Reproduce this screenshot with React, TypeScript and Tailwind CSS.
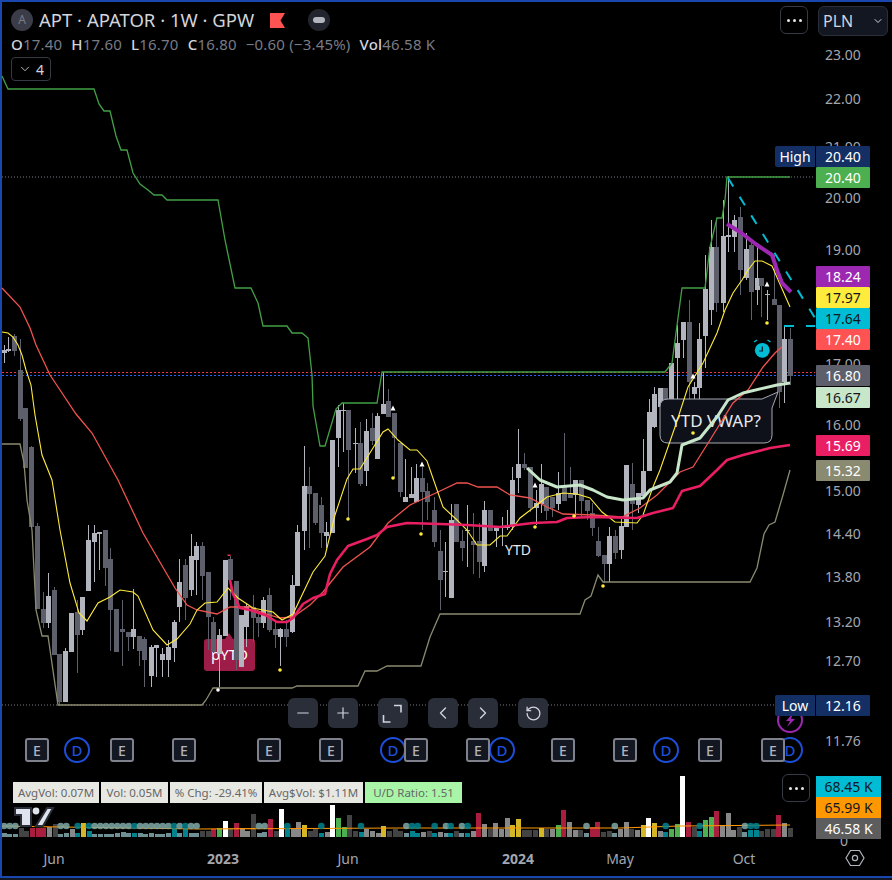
import { ChevronDown, ChevronLeft, ChevronRight, Minus, Plus, RotateCcw } from 'lucide-react';

// x, wick top, wick bottom, body top, body bottom, 1 = up
const candles: number[][] = [
  [4, 345, 363, 350, 353, 1], [8, 337, 352, 349, 351, 1], [14, 334, 356, 336, 351, 0], [20, 339, 421, 370, 419, 0],
  [25, 408, 468, 408, 468, 0], [31, 446, 527, 447, 527, 0], [37, 523, 609, 526, 609, 0], [42.5, 592, 628, 609, 623, 0],
  [48, 573, 628, 596, 623, 1], [54, 587, 655, 590, 655, 0], [59, 654, 706, 654, 702, 0], [65, 648, 702, 651, 702, 1],
  [71, 613, 652, 613, 652, 1], [77, 600, 673, 612, 635, 0], [82, 597, 635, 597, 630, 1], [88, 525, 591, 540, 591, 1],
  [93.5, 525, 582, 533, 542, 1], [99, 532, 570, 532, 534, 1], [105, 530, 586, 530, 568, 0], [110, 548, 651, 559, 610, 0],
  [116, 609, 652, 609, 652, 0], [122, 600, 666, 629, 632, 0], [127.5, 633, 651, 632, 637, 0], [133, 589, 649, 629, 637, 1],
  [139, 637, 666, 636, 651, 0], [144, 637, 687, 639, 660, 0], [150.5, 645, 687, 647, 676, 1], [156, 645, 677, 645, 648, 1],
  [161.5, 648, 677, 654, 660, 1], [167.5, 640, 677, 647, 660, 1], [173.5, 620, 662, 622, 648, 1], [179, 559, 622, 582, 607, 1],
  [184.5, 559, 620, 565, 598, 0], [190.5, 534, 596, 556, 590, 1], [196, 542, 595, 546, 560, 1], [201.5, 542, 600, 546, 576, 0],
  [207.5, 572, 650, 572, 617, 0], [213, 617, 653, 622, 652, 0], [218.5, 629, 687, 635, 654, 1], [224.5, 560, 636, 560, 636, 1],
  [229.5, 556, 600, 559, 580, 0], [235.5, 581, 670, 581, 660, 0], [240.5, 615, 667, 615, 667, 1], [246, 603, 647, 606, 627, 1],
  [252.5, 595, 642, 607, 618, 0], [257.5, 613, 637, 617, 623, 0], [263, 597, 628, 600, 623, 1], [269, 588, 632, 595, 630, 0],
  [274.5, 622, 648, 629, 635, 0], [280, 628, 666, 629, 637, 1], [286, 620, 647, 629, 637, 0], [291.5, 575, 633, 585, 632, 1],
  [297, 525, 586, 532, 586, 1], [303.7, 446, 550, 486, 531, 1], [308.5, 467, 548, 486, 494, 0], [314.5, 493, 525, 493, 523, 0],
  [320.5, 497, 548, 505, 533, 0], [325.5, 522, 548, 532, 536, 1], [331.5, 440, 533, 440, 533, 1], [337.5, 405, 467, 410, 438, 1],
  [342.5, 403, 452, 410, 411, 1], [348, 410, 520, 410, 450, 0], [354.5, 428, 473, 443, 444, 1], [359.5, 422, 486, 443, 484, 0],
  [365.5, 419, 486, 431, 471, 1], [371.5, 413, 445, 428, 441, 0], [376.5, 413, 459, 416, 459, 1], [382.5, 372, 414, 404, 414, 1],
  [388, 389, 417, 401, 417, 0], [393.5, 413, 478, 413, 438, 0], [399.5, 443, 497, 443, 492, 0], [405, 459, 502, 497, 502, 1],
  [410.5, 467, 498, 494, 498, 1], [416, 464, 502, 478, 502, 1], [421.5, 467, 530, 478, 492, 0], [427, 483, 520, 491, 502, 0],
  [433.5, 497, 547, 510, 542, 0], [439.5, 530, 610, 551, 580, 0], [445, 542, 597, 571, 572, 1], [450.5, 504, 598, 520, 598, 1],
  [456, 504, 542, 504, 542, 0], [461.5, 530, 561, 541, 548, 0], [467, 505, 567, 530, 531, 1], [473, 513, 574, 541, 545, 0],
  [478.5, 523, 578, 541, 562, 0], [484, 501, 572, 510, 566, 1], [490, 510, 531, 510, 531, 0], [495.5, 527, 547, 527, 531, 1],
  [501.5, 517, 546, 526, 528, 1], [507, 510, 530, 526, 528, 1], [512, 467, 530, 480, 527, 1], [518, 429, 493, 464, 478, 1],
  [524, 453, 470, 464, 468, 0], [530, 467, 512, 467, 508, 0], [535.5, 490, 525, 503, 508, 1], [540.5, 464, 513, 484, 504, 1],
  [546, 487, 520, 487, 511, 0], [552, 497, 517, 497, 508, 0], [557.5, 472, 510, 493, 504, 1], [563.5, 433, 501, 487, 501, 0],
  [569.5, 467, 498, 493, 498, 0], [575, 480, 517, 480, 495, 1], [581, 480, 517, 480, 501, 0], [586.5, 500, 520, 500, 511, 0],
  [591.5, 503, 536, 513, 528, 0], [597.5, 527, 557, 541, 556, 0], [603.5, 555, 583, 555, 564, 0], [608.5, 527, 582, 536, 564, 1],
  [614.5, 530, 559, 536, 553, 0], [620.5, 519, 559, 526, 550, 1], [625.5, 465, 527, 465, 527, 1], [631.5, 463, 530, 484, 504, 0],
  [637.5, 493, 513, 493, 505, 1], [642.5, 439, 496, 471, 496, 1], [648.5, 399, 471, 412, 471, 1], [654, 387, 428, 394, 427, 1],
  [659.5, 388, 408, 388, 407, 1], [665, 388, 400, 388, 400, 0], [671, 363, 403, 363, 400, 1], [676.5, 325, 400, 343, 358, 1],
  [682.5, 322, 358, 322, 340, 1], [688.5, 300, 412, 322, 382, 0], [693.5, 382, 410, 387, 394, 1], [699, 323, 403, 339, 388, 1],
  [705, 255, 368, 289, 336, 1], [710.5, 220, 325, 247, 310, 1], [716, 218, 312, 247, 303, 0], [722.5, 200, 312, 236, 303, 1],
  [727.5, 176, 252, 235, 237, 1], [733.5, 215, 252, 220, 237, 1], [739.5, 207, 295, 217, 270, 0], [745.5, 233, 280, 249, 278, 1],
  [751, 243, 320, 245, 292, 0], [756.5, 243, 305, 278, 290, 1], [761, 278, 317, 278, 286, 0], [767, 290, 320, 294, 295, 1],
  [773.5, 255, 305, 299, 305, 0], [778.5, 305, 408, 305, 392, 0], [784, 327, 403, 339, 382, 1], [789.5, 328, 385, 339, 376, 0],
];

const toPts = (p: number[][]) => p.map((a) => a.join(',')).join(' ');

const greenLine = [[2, 76], [8, 89], [94, 89], [99, 104], [104, 111], [110, 111], [116, 136], [121, 150], [127, 150], [133, 173], [140, 184], [148, 190], [154, 195], [162, 195], [167, 200], [218, 200], [225, 240], [235, 288], [251, 288], [258, 303], [263, 326], [287, 326], [292, 333], [302, 333], [308, 338], [312, 375], [313, 406], [320, 446], [325, 446], [336, 409], [342, 403], [377, 403], [382, 372], [665, 372], [672, 363], [682, 288], [705, 288], [710, 247], [717, 218], [722, 218], [725, 200], [727, 177], [790, 177]];
const grayLine = [[2, 444], [20, 444], [24, 463], [27, 500], [32, 530], [36, 610], [42, 636], [48, 636], [58, 705], [202, 705], [206, 700], [213, 688], [292, 688], [297, 686], [358, 686], [365, 671], [377, 671], [387, 666], [421, 666], [430, 637], [440, 614], [580, 614], [585, 600], [591, 596], [598, 575], [603, 582], [750, 582], [757, 568], [764, 534], [769, 525], [775, 522], [783, 495], [790, 470]];
const yellowLine = [[2, 332], [8, 333], [13, 337], [18, 345], [22, 355], [26, 370], [31, 385], [35, 415], [42, 455], [52, 480], [60, 530], [70, 583], [79, 613], [87, 621], [98, 603], [110, 597], [120, 590], [133, 592], [138, 596], [153, 630], [167, 645], [177, 639], [190, 624], [197, 610], [205, 603], [217, 602], [228, 588], [238, 598], [253, 608], [273, 612], [282, 620], [293, 614], [313, 572], [325, 556], [335, 515], [347, 479], [353, 469], [360, 469], [373, 448], [383, 432], [388, 429], [398, 440], [410, 450], [417, 450], [427, 461], [443, 507], [457, 520], [467, 530], [477, 545], [490, 545], [500, 536], [507, 536], [520, 518], [533, 508], [547, 497], [563, 493], [577, 494], [590, 498], [602, 512], [615, 522], [637, 523], [643, 515], [653, 487], [660, 470], [675, 427], [688, 387], [703, 363], [717, 333], [725, 310], [733, 293], [742, 280], [748, 270], [755, 261], [762, 261], [772, 266], [790, 307]];
const redLine = [[2, 288], [20, 307], [30, 328], [36, 345], [50, 375], [58, 387], [76, 414], [92, 433], [118, 480], [143, 533], [175, 588], [187, 605], [197, 610], [217, 614], [230, 607], [250, 607], [263, 613], [280, 618], [293, 617], [310, 605], [323, 592], [343, 567], [370, 547], [388, 523], [410, 505], [438, 492], [457, 483], [467, 483], [478, 487], [497, 487], [510, 495], [530, 498], [547, 507], [563, 514], [593, 515], [622, 517], [640, 508], [657, 495], [680, 472], [693, 467], [710, 440], [733, 403], [748, 390], [763, 367], [775, 353], [782, 347]];
const pinkLine = [[230, 580], [233, 594], [240, 608], [250, 610], [265, 615], [277, 622], [287, 622], [293, 618], [303, 604], [313, 598], [325, 594], [330, 574], [337, 560], [348, 546], [367, 539], [377, 535], [387, 527], [407, 523], [440, 524], [467, 525], [500, 527], [533, 523], [557, 522], [567, 518], [593, 517], [637, 518], [653, 513], [673, 508], [682, 491], [700, 486], [717, 470], [727, 460], [743, 455], [770, 448], [790, 445]];
const vwapLine = [[527, 468], [540, 480], [557, 487], [580, 485], [593, 490], [607, 497], [623, 500], [643, 498], [650, 490], [670, 482], [677, 473], [682, 445], [700, 438], [717, 417], [728, 400], [743, 393], [777, 385], [790, 383]];
const purpleLine = [[727, 224], [740, 232], [757, 245], [772, 255], [777, 270], [782, 283], [791, 292]];

const yellowDots = [[693, 433], [767, 323], [348, 519], [393, 478], [421, 534], [535, 527], [574, 516], [603, 586], [280, 670]];
const triangles = [[393, 408], [422, 464], [535, 485], [767, 284], [693, 376]];

const axisTicks: [string, number][] = [
  ['23.00', 55], ['22.00', 99], ['21.00', 147], ['20.00', 198], ['19.00', 250], ['17.00', 364], ['16.00', 425],
  ['15.00', 491], ['14.40', 534], ['13.80', 577], ['13.20', 622], ['12.70', 661], ['11.76', 741],
];

const priceTags: { text: string; top: number; cls: string }[] = [
  { text: '20.40', top: 146, cls: 'bg-[#132f63] text-white' },
  { text: '20.40', top: 167, cls: 'bg-[#4caf50] text-white' },
  { text: '18.24', top: 266, cls: 'bg-[#9c27b0] text-white' },
  { text: '17.97', top: 287, cls: 'bg-[#ffeb3b] text-[#131722]' },
  { text: '17.64', top: 308, cls: 'bg-[#00bcd4] text-[#131722]' },
  { text: '17.40', top: 329, cls: 'bg-[#ff5252] text-white' },
  { text: '16.80', top: 365, cls: 'bg-[#5d606b] text-white' },
  { text: '16.67', top: 387, cls: 'bg-[#c8e6c9] text-[#131722]' },
  { text: '15.69', top: 435, cls: 'bg-[#e91e63] text-white' },
  { text: '15.32', top: 460, cls: 'bg-[#8a8a70] text-white' },
  { text: '12.16', top: 695, cls: 'bg-[#132f63] text-white' },
];

const eBadges = [37, 122, 184, 269, 331, 416, 478, 563, 625, 710, 773];
const dBadges = [77, 393, 502, 666, 790];

const volColors: Record<string, string> = {
  d: '#434343', g: '#888888', r: '#a91e3f', G: '#4caf50', y: '#d4b726', w: '#ffffff', t: '#00838f', l: '#6f9094',
};

// heights in zoomed units (1/3 px), left half then right half of the pane
const volA: [number, string][] = [
  [10, 'l'], [8, 'l'], [8, 'l'], [25, 'd'], [18, 'd'], [27, 'r'], [27, 'r'], [27, 'r'], [30, 'g'], [38, 'd'],
  [8, 'l'], [12, 'l'], [22, 'g'], [10, 't'], [40, 'y'], [18, 't'], [8, 'l'], [8, 'l'], [8, 'l'], [8, 'l'],
  [12, 'l'], [14, 'l'], [10, 'l'], [12, 't'], [10, 'l'], [8, 'l'], [10, 'l'], [8, 'l'], [8, 'l'], [10, 'l'],
  [22, 't'], [12, 'l'], [25, 't'], [12, 'l'], [10, 'l'], [18, 'd'], [18, 'd'], [22, 'r'], [26, 'G'], [46, 'w'],
  [26, 'd'], [42, 'r'], [26, 'g'], [18, 'g'], [68, 'd'], [12, 'l'], [15, 'l'], [52, 'r'], [18, 'd'], [84, 'w'],
  [25, 't'], [22, 'g'], [44, 'g'], [35, 'y'], [18, 'd'], [22, 'd'], [12, 't'], [14, 'g'], [95, 'w'], [56, 'G'],
  [30, 'G'], [65, 'd'], [18, 'd'], [14, 't'], [24, 'g'], [18, 'g'], [12, 'g'], [32, 'y'], [18, 'd'], [22, 'd'],
  [18, 'd'], [12, 'l'], [18, 't'], [12, 't'], [15, 'g'], [18, 'd'], [12, 't'], [15, 'g'], [12, 'l'],
];
const volB: [number, string][] = [
  [12, 't'], [18, 'd'], [12, 'l'], [12, 't'], [18, 'g'], [70, 'r'], [38, 'g'], [22, 'd'], [40, 'g'], [24, 'g'],
  [55, 'g'], [35, 'y'], [52, 'y'], [20, 'd'], [20, 'd'], [20, 'd'], [26, 'y'], [24, 'd'], [24, 'g'], [34, 'G'],
  [80, 'r'], [44, 'g'], [20, 'g'], [20, 'd'], [10, 'l'], [28, 'r'], [44, 'r'], [15, 'd'], [18, 'd'], [10, 'l'],
  [22, 'g'], [44, 'g'], [22, 'd'], [20, 'g'], [35, 'y'], [56, 'w'], [42, 'y'], [18, 'g'], [14, 't'], [24, 'G'],
  [38, 'G'], [182, 'w'], [44, 'r'], [28, 'd'], [18, 't'], [50, 'G'], [60, 'G'], [78, 'r'], [35, 'g'], [70, 'g'],
  [20, 'g'], [30, 'd'], [14, 'l'], [20, 't'], [20, 't'], [18, 'd'], [24, 'd'], [24, 'd'], [65, 'r'], [40, 'g'], [25, 'd'],
];
const volBars = [
  ...volA.map(([h, c], i) => ({ x: (12 + 17 * i) / 3, h: h / 3, c })),
  ...volB.map(([h, c], i) => ({ x: 446 + (14 + 16.98 * i) / 3, h: h / 3, c })),
];

const statChips: { text: string; cls: string }[] = [
  { text: 'AvgVol: 0.07M', cls: 'w-[86px] bg-[#e8e8e3]' },
  { text: 'Vol: 0.05M', cls: 'w-[67px] bg-[#e8e8e3]' },
  { text: '% Chg: -29.41%', cls: 'w-[92px] bg-[#e8e8e3]' },
  { text: 'Avg$Vol: $1.11M', cls: 'w-[99px] bg-[#e8e8e3]' },
  { text: 'U/D Ratio: 1.51', cls: 'w-[97px] bg-[#a8f5a8]' },
];

const timeLabels: { text: string; center: number; bold?: boolean }[] = [
  { text: 'Jun', center: 54 },
  { text: '2023', center: 223, bold: true },
  { text: 'Jun', center: 348 },
  { text: '2024', center: 518, bold: true },
  { text: 'May', center: 620 },
  { text: 'Oct', center: 744 },
];

function ZoomButton({ children, cls }: { children: React.ReactNode; cls?: string }) {
  return (
    <div className={`flex h-[30px] w-[30px] items-center justify-center rounded-md bg-[#2a2e39] text-[#d1d4dc] ${cls ?? ''}`}>
      {children}
    </div>
  );
}

function DotsButton() {
  return (
    <div className="flex h-[28px] w-[28px] items-center justify-center gap-[3px] rounded-md border border-[#363a45] bg-black">
      <span className="h-[3px] w-[3px] rounded-full bg-[#e8e8e8]" />
      <span className="h-[3px] w-[3px] rounded-full bg-[#e8e8e8]" />
      <span className="h-[3px] w-[3px] rounded-full bg-[#e8e8e8]" />
    </div>
  );
}

function Legend() {
  const item = (l: string, v: string) => (
    <span>
      <span className="font-medium text-[#d1d4dc]">{l}</span>
      {v}
    </span>
  );
  return (
    <div className="absolute left-[9px] top-[7px] z-20">
      <div className="flex items-center">
        <div className="flex h-[22px] w-[22px] items-center justify-center rounded-full bg-[#3a3d47] text-[12px] text-[#787b86]">A</div>
        <span className="ml-[6px] text-[18.5px] leading-[22px] text-[#d1d4dc]">APT · APATOR · 1W · GPW</span>
        <svg width="15" height="15" viewBox="0 0 15 15" className="ml-[16px]">
          <polygon points="0,0 15,0 10.5,7.5 15,15 0,15" fill="#ff5252" />
        </svg>
        <div className="ml-[23px] flex h-[22px] w-[22px] items-center justify-center rounded-full bg-[#22252e]">
          <span className="h-[6px] w-[12px] rounded-[3px] bg-[#b2b5be]" />
        </div>
      </div>
      <div className="mt-[4px] flex gap-[9px] whitespace-nowrap text-[15px] leading-[18px] tracking-[0.2px] text-[#787b86]">
        {item('O', '17.40')}
        {item('H', '17.60')}
        {item('L', '16.70')}
        {item('C', '16.80')}
        <span>−0.60 (−3.45%)</span>
        {item('Vol', '46.58 K')}
      </div>
      <div className="mt-[4px] flex h-[24px] w-[40px] items-center justify-center gap-[4px] rounded border border-[#363a45] text-[14px] text-[#d1d4dc]">
        <ChevronDown size={14} strokeWidth={1.5} />
        <span>4</span>
      </div>
    </div>
  );
}

function PriceChart() {
  return (
    <svg viewBox="2 2 812 768" className="absolute inset-0 h-[768px] w-[812px] overflow-visible font-['Noto_Sans',sans-serif]">
      <line x1="2" x2="815" y1="177" y2="177" stroke="#787b86" strokeDasharray="1 2" />
      <line x1="2" x2="815" y1="705" y2="705" stroke="#787b86" strokeDasharray="1 2" />
      <line x1="2" x2="815" y1="372.5" y2="372.5" stroke="#f23645" strokeDasharray="2 2" />
      <line x1="2" x2="815" y1="375.5" y2="375.5" stroke="#2962ff" strokeDasharray="2 2" />

      <path d="M207 639 L225 639 L229 633 L233 639 L252 639 Q255 639 255 642 L255 668 Q255 671 252 671 L207 671 Q204 671 204 668 L204 642 Q204 639 207 639 Z" fill="#9e1c48" />
      <text x="229.5" y="660" textAnchor="middle" fontSize="15" fill="#fff">pYTD</text>

      {candles.map(([x, wt, wb, bt, bb, up], i) => (
        <g key={i} fill={up ? '#b2b5be' : '#5d606b'} shapeRendering="crispEdges">
          <rect x={Math.round(x)} y={wt} width="1" height={wb - wt} />
          <rect x={Math.round(x) - 2} y={bt} width="5" height={Math.max(bb - bt, 1)} />
        </g>
      ))}

      <path d="M668 399 L762 399 L778 392 L772 408 L772 435 Q772 443 764 443 L668 443 Q660 443 660 435 L660 407 Q660 399 668 399 Z" fill="#0e111a" stroke="#a6a9b2" strokeWidth="1" />
      <text x="716" y="427" textAnchor="middle" fontSize="17" fill="#e8e9ee">YTD VWAP?</text>
      <text x="518" y="555" textAnchor="middle" fontSize="14" fill="#e8e9ee">YTD</text>

      <polyline points={toPts(grayLine)} fill="none" stroke="#8a8a70" strokeWidth="1.3" />
      <polyline points={toPts(greenLine)} fill="none" stroke="#43a047" strokeWidth="1.3" />
      <polyline points={toPts(redLine)} fill="none" stroke="#ef5350" strokeWidth="1.3" />
      <polyline points={toPts(yellowLine)} fill="none" stroke="#ffeb3b" strokeWidth="1.1" />
      <polyline points={toPts(pinkLine)} fill="none" stroke="#e91e63" strokeWidth="2.6" strokeLinejoin="round" />
      <polyline points={toPts(vwapLine)} fill="none" stroke="#c8e6c9" strokeWidth="3" strokeLinejoin="round" />
      <polyline points={toPts(purpleLine)} fill="none" stroke="#9c27b0" strokeWidth="4" strokeLinejoin="round" />

      <line x1="728" y1="178" x2="815" y2="318" stroke="#00bcd4" strokeWidth="2" strokeDasharray="10 12" />
      <line x1="784" y1="326" x2="815" y2="326" stroke="#00bcd4" strokeWidth="2" strokeDasharray="10 12" />

      {yellowDots.map(([x, y]) => (
        <circle key={`${x}-${y}`} cx={x} cy={y} r="1.8" fill="#ffeb3b" />
      ))}
      <circle cx="218" cy="690" r="1.8" fill="#fff" />
      <rect x="227.5" y="554.5" width="3" height="1.5" fill="#f23645" />
      {triangles.map(([x, y]) => (
        <polygon key={x} points={`${x - 2.5},${y + 2.5} ${x},${y - 2.5} ${x + 2.5},${y + 2.5}`} fill="#fff" />
      ))}

      <g>
        <circle cx="762.3" cy="350.3" r="7.4" fill="#00bcd4" />
        <path d="M762.3 346.5 V351 H759" fill="none" stroke="#131722" strokeWidth="1.2" />
        <path d="M754 342 L757 340 M767.5 340 L770.5 342" stroke="#00bcd4" strokeWidth="1.4" />
      </g>
    </svg>
  );
}

function VolumeChart() {
  return (
    <svg viewBox="2 770 812 70" className="absolute inset-0 h-[70px] w-[812px]">
      {volBars.map((b, i) => (
        <rect key={i} x={b.x - 2.5} y={836.7 - b.h} width="5" height={b.h} fill={volColors[b.c]} shapeRendering="crispEdges" />
      ))}
      <polyline points="2,826 60,827 200,829 400,828 620,828 680,826 790,825" fill="none" stroke="#ff9800" strokeWidth="1.2" />
      {volBars
        .filter((b) => b.c === 't' || b.c === 'l')
        .map((b, i) => (
          <circle key={i} cx={b.x} cy="826" r="3.3" fill={b.c === 't' ? '#00838f' : '#7fa9a6'} fillOpacity="0.85" />
        ))}
    </svg>
  );
}

export default function App() {
  return (
    <div className="h-[880px] w-[892px] overflow-hidden bg-[#131722] font-['Noto_Sans',sans-serif]">
      <div className="flex h-[878px] flex-col border-b-2 border-l-2 border-t-2 border-b-[#1a47ad] border-l-[#1a47ad] border-t-[#1a47ad] bg-black">
        {/* price pane */}
        <div className="flex h-[768px]">
          <div className="relative w-[812px]">
            <PriceChart />
            <Legend />

            {dBadges.map((x) => (
              <div
                key={x}
                className="absolute top-[735px] flex h-[26px] w-[26px] items-center justify-center rounded-full border-2 border-[#1d4ed8] bg-black text-[15px] font-medium text-[#1d4ed8]"
                style={{ left: x - 15 }}
              >
                D
              </div>
            ))}
            {eBadges.map((x) => (
              <div
                key={x}
                className="absolute top-[736px] flex h-[24px] w-[24px] items-center justify-center rounded-[3px] border-2 border-[#7f828c] bg-[#131722] text-[14px] font-medium text-[#b2b5be]"
                style={{ left: x - 14 }}
              >
                E
              </div>
            ))}

            <div className="absolute left-[286px] top-[696px] flex">
              <ZoomButton><Minus size={18} strokeWidth={1.6} /></ZoomButton>
              <ZoomButton cls="ml-[10px]"><Plus size={18} strokeWidth={1.6} /></ZoomButton>
              <ZoomButton cls="ml-[20px]">
                <svg width="30" height="30" viewBox="0 0 30 30" fill="none" stroke="currentColor" strokeWidth="1.6">
                  <path d="M16 7.5h7v7M5.5 17v7h7" />
                </svg>
              </ZoomButton>
              <ZoomButton cls="ml-[20px]"><ChevronLeft size={20} strokeWidth={1.6} /></ZoomButton>
              <ZoomButton cls="ml-[10px]"><ChevronRight size={20} strokeWidth={1.6} /></ZoomButton>
              <ZoomButton cls="ml-[20px]"><RotateCcw size={17} strokeWidth={1.8} /></ZoomButton>
            </div>
          </div>

          {/* price axis */}
          <div className="relative flex-1 text-[14px] text-[#a3a6af]">
            {axisTicks.map(([t, y]) => (
              <span key={t} className="absolute left-[2px] w-[54px] text-center leading-[16px]" style={{ top: y - 10 }}>
                {t}
              </span>
            ))}
            <svg width="30" height="30" viewBox="0 0 30 30" className="absolute left-[-39px] top-[703px] overflow-visible">
              <circle cx="15" cy="15" r="12" fill="#000" stroke="#9c27b0" strokeWidth="2" />
              <path d="M18 8 L11 16 H15 L12 22 L20 14 H16 Z" fill="#9c27b0" />
            </svg>
            {priceTags.map((p) => (
              <span
                key={p.top}
                className={`absolute left-[2px] flex h-[21px] w-[54px] items-center justify-center rounded-[1px] ${p.cls}`}
                style={{ top: p.top - 2 }}
              >
                {p.text}
              </span>
            ))}
            <span className="absolute left-[-39px] top-[144px] flex h-[21px] w-[40px] items-center justify-center rounded-l-[2px] bg-[#132f63] text-white">High</span>
            <span className="absolute left-[-39px] top-[693px] flex h-[21px] w-[40px] items-center justify-center rounded-l-[2px] bg-[#132f63] text-white">Low</span>
            <div className="absolute left-[4px] top-[4px] flex h-[30px] w-[70px] items-center justify-between rounded-md border border-[#2a2e39] bg-[#131722] pl-[4px] pr-[3px] text-[16px] text-[#d1d4dc]">
              PLN
              <ChevronDown size={12} strokeWidth={2} />
            </div>
            <div className="absolute left-[-34px] top-[4px]">
              <DotsButton />
            </div>
          </div>
        </div>

        {/* volume pane */}
        <div className="flex h-[70px]">
          <div className="relative w-[812px]">
            <VolumeChart />
            <div className="absolute left-[11px] top-[12px] flex gap-[2px]">
              {statChips.map((s) => (
                <span key={s.text} className={`flex h-[21px] items-center justify-center whitespace-nowrap text-[11.5px] text-[#666666] ${s.cls}`}>
                  {s.text}
                </span>
              ))}
            </div>
            <svg width="42" height="24" viewBox="0 0 42 24" className="absolute left-[11px] top-[35px]">
              <path d="M2 3H18V21H8V10H2Z M34 3H40L30 21H23Z" fill="#dfe3ec" stroke="#2a2e39" strokeWidth="2" />
              <circle cx="23" cy="6" r="3.4" fill="#dfe3ec" />
            </svg>
            <div className="absolute left-[780px] top-[4px]">
              <DotsButton />
            </div>
          </div>
          <div className="relative flex-1 text-[14px]">
            <span className="absolute left-[26px] top-[60px] text-[#a3a6af]">0</span>
            <div className="absolute left-[2px] top-[6px] flex w-[65px] flex-col">
              <span className="flex h-[21px] items-center justify-center bg-[#00bcd4] text-[#131722]">68.45 K</span>
              <span className="flex h-[21px] items-center justify-center bg-[#ff9800] text-[#131722]">65.99 K</span>
              <span className="flex h-[21px] items-center justify-center bg-[#5d5d5d] text-white">46.58 K</span>
            </div>
          </div>
        </div>

        {/* time axis */}
        <div className="relative flex h-[36px] items-center text-[14px] text-[#a3a6af]">
          {timeLabels.map((t) => (
            <span
              key={t.center}
              className={`absolute w-[60px] text-center ${t.bold ? 'font-bold' : ''}`}
              style={{ left: t.center - 32 }}
            >
              {t.text}
            </span>
          ))}
          <svg width="20" height="18" viewBox="0 0 20 18" fill="none" stroke="#b2b5be" strokeWidth="1.2" className="absolute left-[843px]">
            <polygon points="1,9 5.5,1.5 14.5,1.5 19,9 14.5,16.5 5.5,16.5" />
            <circle cx="10" cy="9" r="2.6" />
          </svg>
        </div>
      </div>
    </div>
  );
}
